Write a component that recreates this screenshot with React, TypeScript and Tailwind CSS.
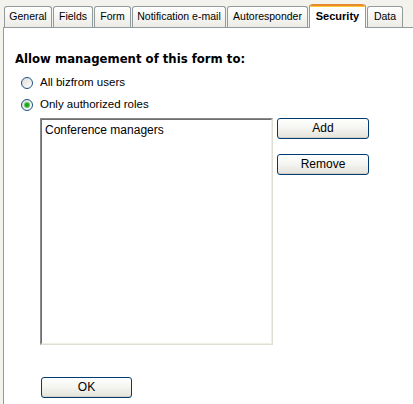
import { useState } from "react";

const TABS = [
    { label: "General", w: "w-[48px]" },
    { label: "Fields", w: "w-[40px]" },
    { label: "Form", w: "w-[37px]" },
    { label: "Notification e-mail", w: "w-[94px]" },
    { label: "Autoresponder", w: "w-[81px]" },
    { label: "Security", w: "w-[57px]" },
    { label: "Data", w: "w-[36px]" },
];

function Tab({ label, w, active }: { label: string; w: string; active: boolean }) {
    if (active) {
        return (
            <div className={`${w} relative -mb-px flex h-[24px] flex-col rounded-t-[3px] border-x border-[#919b9c] bg-white`}>
                <div className="h-[3px] rounded-t-[3px] bg-[#e68b2c] shadow-[inset_0_-1px_0_#ffc83c]" />
                <div className="flex flex-1 items-center justify-center pb-[2px] text-[11px] font-bold text-black">{label}</div>
            </div>
        );
    }
    return (
        <div
            className={`${w} flex h-[21px] items-center justify-center rounded-t-[3px] border border-b-0 border-[#919b9c] bg-gradient-to-b from-white to-[#ecebe6] text-[10.5px] text-black`}
        >
            {label}
        </div>
    );
}

function Radio({ checked, label, onClick }: { checked: boolean; label: string; onClick: () => void }) {
    return (
        <div className="flex h-[22px] items-center gap-[7px] pl-[17px]" onClick={onClick}>
            <span className="flex h-[12px] w-[12px] items-center justify-center rounded-full border border-[#1c5180] bg-gradient-to-br from-[#dcdcd7] to-white">
                {checked && <span className="h-[4px] w-[4px] rounded-full bg-[#21a121] shadow-[0_0_0_1px_#5ec85e]" />}
            </span>
            <span className="text-[11.5px] text-black">{label}</span>
        </div>
    );
}

function XpButton({ label, className }: { label: string; className: string }) {
    return (
        <button
            className={`${className} flex h-[21px] items-center justify-center rounded-[3px] border border-[#003c74] bg-gradient-to-b from-white via-[#f4f4f0] to-[#e3e2da] text-[12px] text-black shadow-[inset_0_-1px_0_#d6d0c5]`}
        >
            {label}
        </button>
    );
}

export default function App() {
    const [scope, setScope] = useState<"all" | "roles">("roles");

    return (
        <div className="h-[404px] w-[413px] overflow-hidden bg-[#f3f2ec] font-['Liberation_Sans',Arial,sans-serif]">
            <div className="flex h-[27px] items-end gap-[1px] pl-[4px]">
                {TABS.map((t) => (
                    <Tab key={t.label} label={t.label} w={t.w} active={t.label === "Security"} />
                ))}
            </div>

            <div className="ml-[3px] h-[377px] border-l border-t border-[#919b9c] bg-white">
                <div className="pl-[11px] pt-[23px] font-['DejaVu_Sans',Verdana,sans-serif] text-[11.7px] font-bold text-black">
                    Allow management of this form to:
                </div>

                <div className="mt-[3px]">
                    <Radio checked={scope === "all"} label="All bizfrom users" onClick={() => setScope("all")} />
                    <Radio checked={scope === "roles"} label="Only authorized roles" onClick={() => setScope("roles")} />
                </div>

                <div className="mt-[2px] flex gap-[4px] pl-[36px]">
                    <div className="h-[227px] w-[233px] border border-b-[#e0ddd2] border-l-[#8a8a8a] border-r-[#e0ddd2] border-t-[#8a8a8a]">
                        <div className="h-full w-full border border-b-[#f1efe2] border-l-[#6e6e6e] border-r-[#f1efe2] border-t-[#6e6e6e] px-[3px] pt-[1px] text-[12px] text-black">
                            Conference managers
                        </div>
                    </div>
                    <div className="flex flex-col gap-[15px]">
                        <XpButton label="Add" className="w-[92px]" />
                        <XpButton label="Remove" className="w-[92px]" />
                    </div>
                </div>

                <div className="mt-[32px] pl-[37px]">
                    <XpButton label="OK" className="w-[91px]" />
                </div>
            </div>
        </div>
    );
}
